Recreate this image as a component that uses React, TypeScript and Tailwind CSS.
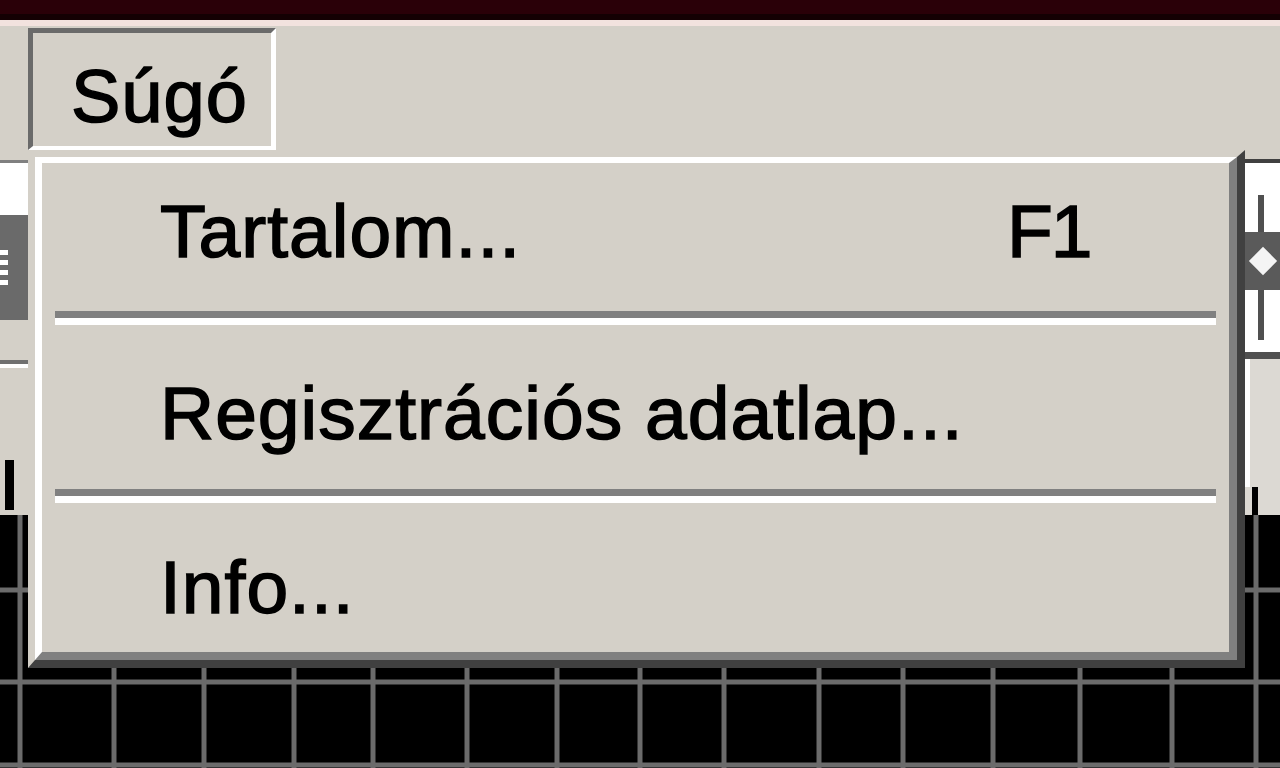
const font = "font-['Liberation_Sans','Arial',sans-serif]";

const gridX = [20, 114, 204, 294, 373, 467, 557, 640, 724, 819, 903, 993, 1080, 1172, 1256];
const gridY = [75, 167, 250];

const items = [
  { label: 'Tartalom...', shortcut: 'F1', box: 'h-[148px] pt-[30px]' },
  { label: 'Regisztrációs adatlap...', shortcut: '', box: 'h-[164px] pt-[50px]' },
  { label: 'Info...', shortcut: '', box: 'h-[147px] pt-[46px]' },
];

function Separator() {
  return (
    <div className="mx-[13px] flex flex-col">
      <div className="h-[7px] bg-[#808080]" />
      <div className="h-[7px] bg-white" />
    </div>
  );
}

function LeftStrip() {
  return (
    <div className="flex w-[28px] shrink-0 flex-col bg-[#d4d0c8]">
      <div className="h-[3px]" />
      <div className="h-[3px] bg-[#808080]" />
      <div className="h-[52px] bg-white" />
      <div className="flex h-[105px] flex-col justify-center gap-[5px] bg-[#6a6a6a] pr-[20px]">
        <div className="h-[5px] bg-white" />
        <div className="h-[5px] bg-white" />
        <div className="h-[5px] bg-white" />
        <div className="h-[5px] bg-white" />
      </div>
      <div className="h-[40px]" />
      <div className="h-[4px] bg-[#707070]" />
      <div className="h-[4px] bg-white" />
      <div className="h-[92px]" />
      <div className="h-[55px]">
        <div className="ml-[5px] h-[50px] w-[9px] bg-black" />
      </div>
    </div>
  );
}

function RightStrip() {
  return (
    <div className="flex w-[35px] shrink-0 flex-col bg-[#d4d0c8]">
      <div className="h-[2px]" />
      <div className="h-[4px] bg-[#404040]" />
      <div className="flex h-[69px] items-end bg-white pl-[13px]">
        <div className="h-[37px] w-[6px] bg-[#505050]" />
      </div>
      <div className="flex h-[58px] items-center justify-center bg-[#5a5a5a]">
        <div className="h-[20px] w-[20px] rotate-45 bg-[#f4f4f4]" />
      </div>
      <div className="flex h-[62px] items-start bg-white pl-[13px]">
        <div className="h-[50px] w-[6px] bg-[#505050]" />
      </div>
      <div className="h-[7px] bg-[#505050]" />
      <div className="h-[128px] border-l-[5px] border-white bg-[#dcd9d3]" />
      <div className="h-[28px] bg-[#dcd9d3] pl-[7px]">
        <div className="h-[28px] w-[6px] bg-black" />
      </div>
    </div>
  );
}

function HelpMenu() {
  return (
    <div className="absolute left-[28px] top-[150px] h-[518px] w-[1217px] border-b-[8px] border-l-[7px] border-r-[8px] border-t-[7px] border-b-[#404040] border-l-[#d4d0c8] border-r-[#404040] border-t-[#d4d0c8]">
      <div className="flex h-full flex-col border-b-[8px] border-l-[7px] border-r-[8px] border-t-[6px] border-b-[#808080] border-l-white border-r-[#808080] border-t-white bg-[#d4d0c8]">
        {items.map((item, idx) => (
          <div key={item.label}>
            {idx > 0 && <Separator />}
            <div className={`flex ${item.box} pl-[118px] text-[75px] leading-[76px] tracking-[1px] text-black [-webkit-text-stroke:1.5px_black]`}>
              <span className="flex-1 whitespace-nowrap">{item.label}</span>
              {item.shortcut && <span className="w-[222px] tracking-[-2px]">{item.shortcut}</span>}
            </div>
          </div>
        ))}
      </div>
    </div>
  );
}

export default function App() {
  return (
    <div className={`relative h-[768px] w-[1280px] overflow-hidden bg-black ${font}`}>
      {/* title bar remnant */}
      <div className="h-[14px] bg-[#2a0008]" />
      <div className="h-[6px] bg-[#140003]" />
      <div className="h-[6px] bg-[#f2e2de]" />

      {/* menu bar */}
      <div className="h-[131px] bg-[#d4d0c8] pl-[28px] pt-[2px]">
        <div className="h-[122px] w-[248px] border-b-[4px] border-l-[5px] border-r-[5px] border-t-[5px] border-b-white border-l-[#6a6a6a] border-r-white border-t-[#6a6a6a] pl-[38px] pt-[26px] text-[74px] leading-[76px] tracking-[1px] text-black [-webkit-text-stroke:1.5px_black]">
          Súgó
        </div>
      </div>

      {/* toolbar row behind the menu */}
      <div className="flex h-[358px]">
        <LeftStrip />
        <div className="flex-1 bg-[#d4d0c8]" />
        <RightStrip />
      </div>

      {/* black canvas with grid */}
      <svg width="1280" height="253" className="block">
        {gridY.map((y) => (
          <line key={`h${y}`} x1="0" x2="1280" y1={y} y2={y} stroke="#6b6b6b" strokeWidth="5" />
        ))}
        {gridX.map((x) => (
          <line key={`v${x}`} x1={x} x2={x} y1="0" y2="253" stroke="#6b6b6b" strokeWidth="5" />
        ))}
      </svg>

      <HelpMenu />
    </div>
  );
}
